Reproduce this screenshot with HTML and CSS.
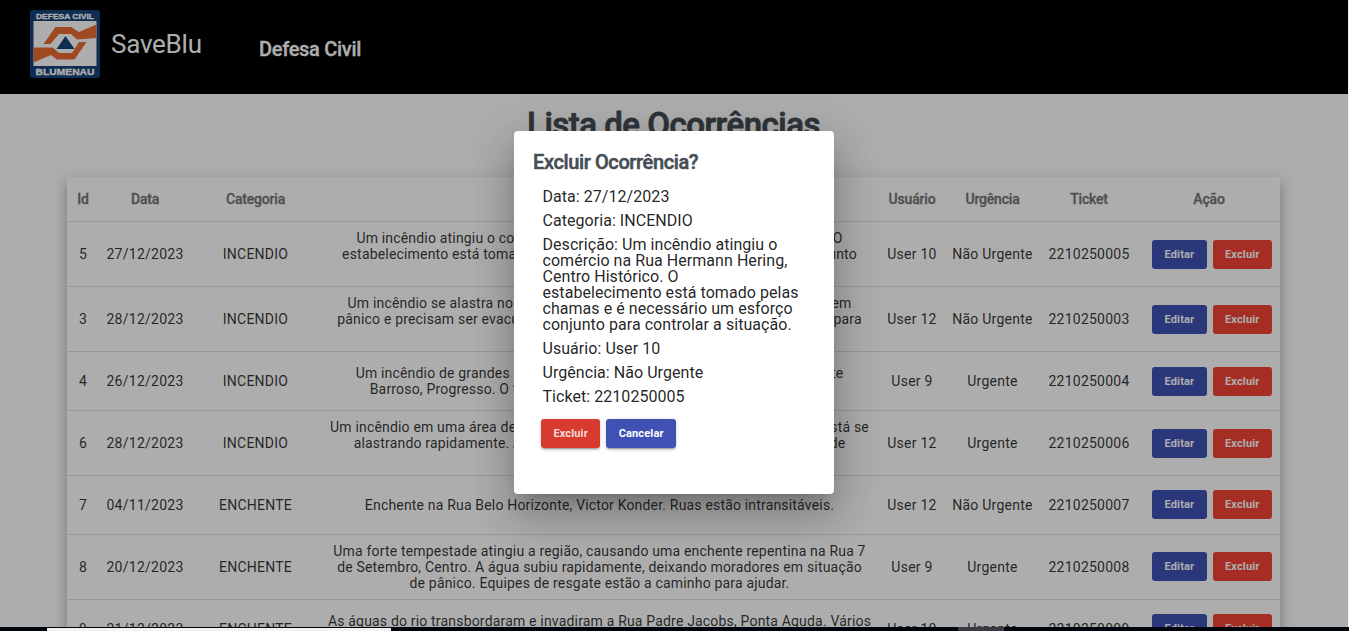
FILE: index.html
```html
<!DOCTYPE html>
<html lang="pt-BR">
<head>
<meta charset="utf-8">
<title>SaveBlu</title>
<link rel="stylesheet" href="styles.css">
</head>
<body>
<div class="app">
  <header class="topbar">
    <svg class="logo" viewBox="0 0 70 68">
      <rect width="70" height="68" rx="3" fill="#15437a"/>
      <rect x="3.5" y="11" width="63" height="45" fill="#fff"/>
      <path d="M13.500 34 25.500 17H41L49 22 66.500 14.500V28L47 29.500 41 24H29L20.500 34Z" fill="#ea6c33"/>
      <path d="M3.500 37.500H22.500L29 43H42L49 32H56.500L44.500 49.500H27L21 45 3.500 52.500Z" fill="#ea6c33"/>
      <path d="M35.500 26 44.500 39H26.500Z" fill="#15437a"/>
      <text x="35" y="9" textLength="58" lengthAdjust="spacingAndGlyphs" class="logo-text logo-top">DEFESA CIVIL</text>
      <text x="35" y="64.700" textLength="59" lengthAdjust="spacingAndGlyphs" class="logo-text logo-bottom">BLUMENAU</text>
    </svg>
    <span class="brand">SaveBlu</span>
    <span class="section">Defesa Civil</span>
  </header>
  <main class="content">
    <h1 class="page-title">Lista de Ocorrências</h1>
    <table class="list">
      <colgroup><col class="c-id"><col class="c-date"><col class="c-cat"><col class="c-desc"><col class="c-user"><col class="c-urg"><col class="c-ticket"><col class="c-act"></colgroup>
      <thead><tr><th>Id</th><th>Data</th><th>Categoria</th><th>Descrição</th><th>Usuário</th><th>Urgência</th><th>Ticket</th><th>Ação</th></tr></thead>
      <tbody>
        <tr class="tall"><td>5</td><td>27/12/2023</td><td>INCENDIO</td><td class="desc">Um incêndio atingiu o comércio na Rua Hermann Hering, Centro Histórico. O<br>estabelecimento está tomado pelas chamas e é necessário um esforço conjunto<br>para controlar a situação.</td><td>User 10</td><td>Não Urgente</td><td>2210250005</td><td><button class="btn primary">Editar</button><button class="btn warn">Excluir</button></td></tr>
        <tr class="tall"><td>3</td><td>28/12/2023</td><td>INCENDIO</td><td class="desc">Um incêndio se alastra no prédio da Rua São Paulo, Victor Konder. Pessoas em<br>pânico e precisam ser evacuadas do lar. Bombeiros estão a caminho do local para<br>ajudar.</td><td>User 12</td><td>Não Urgente</td><td>2210250003</td><td><button class="btn primary">Editar</button><button class="btn warn">Excluir</button></td></tr>
        <tr><td>4</td><td>26/12/2023</td><td>INCENDIO</td><td class="desc">Um incêndio de grandes proporções atingiu a fábrica situada na Rua Vicente<br>Barroso, Progresso. O fogo se espalha e os bombeiros já estão no local.</td><td>User 9</td><td>Urgente</td><td>2210250004</td><td><button class="btn primary">Editar</button><button class="btn warn">Excluir</button></td></tr>
        <tr class="tall"><td>6</td><td>28/12/2023</td><td>INCENDIO</td><td class="desc">Um incêndio em uma área de mata seca próxima da Rua Bahia, Salto. O fogo está se<br>alastrando rapidamente. As equipes já estão no local com o apoio aéreo e de<br>voluntários.</td><td>User 12</td><td>Urgente</td><td>2210250006</td><td><button class="btn primary">Editar</button><button class="btn warn">Excluir</button></td></tr>
        <tr><td>7</td><td>04/11/2023</td><td>ENCHENTE</td><td class="desc">Enchente na Rua Belo Horizonte, Victor Konder. Ruas estão intransitáveis.</td><td>User 12</td><td>Não Urgente</td><td>2210250007</td><td><button class="btn primary">Editar</button><button class="btn warn">Excluir</button></td></tr>
        <tr class="tall"><td>8</td><td>20/12/2023</td><td>ENCHENTE</td><td class="desc">Uma forte tempestade atingiu a região, causando uma enchente repentina na Rua 7<br>de Setembro, Centro. A água subiu rapidamente, deixando moradores em situação<br>de pânico. Equipes de resgate estão a caminho para ajudar.</td><td>User 9</td><td>Urgente</td><td>2210250008</td><td><button class="btn primary">Editar</button><button class="btn warn">Excluir</button></td></tr>
        <tr><td>9</td><td>21/12/2023</td><td>ENCHENTE</td><td class="desc">As águas do rio transbordaram e invadiram a Rua Padre Jacobs, Ponta Aguda. Vários<br>moradores estão desabrigados.</td><td>User 10</td><td>Urgente</td><td>2210250009</td><td><button class="btn primary">Editar</button><button class="btn warn">Excluir</button></td></tr>
      </tbody>
    </table>
  </main>
  <div class="backdrop">
    <section class="dialog" role="dialog">
      <h2 class="dialog-title">Excluir Ocorrência?</h2>
      <div class="details">
        <p>Data: 27/12/2023</p>
        <p>Categoria: INCENDIO</p>
        <p>Descrição: Um incêndio atingiu o comércio na Rua Hermann Hering, Centro Histórico. O estabelecimento está tomado pelas chamas e é necessário um esforço conjunto para controlar a situação.</p>
        <p>Usuário: User 10</p>
        <p>Urgência: Não Urgente</p>
        <p>Ticket: 2210250005</p>
      </div>
      <div class="actions"><button class="btn warn focused">Excluir</button><button class="btn primary">Cancelar</button></div>
    </section>
  </div>
</div>
<footer class="taskbar"><span class="task-search"></span><span class="task-active"></span></footer>
</body>
</html>
```
FILE: styles.css
```css
* { box-sizing: border-box; }
body { margin: 0; height: 631px; overflow: hidden; font-family: Roboto, sans-serif; background: #f1f1f1; }
.app { position: relative; width: 1348px; height: 627px; overflow: hidden; background: #fff; }
.topbar { height: 94px; background: #000; color: #fff; display: flex; align-items: flex-start; padding: 10px 30px; }
.logo { width: 70px; height: 68px; }
.logo-text { fill: #fff; font-family: "Liberation Sans", sans-serif; font-weight: 700; text-anchor: middle; stroke: #fff; stroke-width: .3px; }
.logo-top { font-size: 8px; }
.logo-bottom { font-size: 9.500px; }
.brand { width: 91px; margin: 19px 0 0 11px; font-size: 26px; line-height: 30px; letter-spacing: -.25px; }
.section { margin: 28px 0 0 57px; font-size: 20px; line-height: 23px; font-weight: 500; letter-spacing: -.3px; -webkit-text-stroke: .3px; }
.content { padding: 12px 68px 0 67px; }
.page-title { margin: 0 0 33px; text-align: center; font-size: 33px; line-height: 38px; font-weight: 500; -webkit-text-stroke: .8px; letter-spacing: -.5px; color: #454d55; }
.list { width: 1213px; table-layout: fixed; border-collapse: separate; border-spacing: 0; background: #fff; box-shadow: 0 5px 5px -3px rgba(0,0,0,.2), 0 8px 10px 1px rgba(0,0,0,.14), 0 3px 14px 2px rgba(0,0,0,.12); }
.c-id { width: 32px; } .c-date { width: 92px; } .c-cat { width: 129px; } .c-desc { width: 559px; }
.c-user { width: 66px; } .c-urg { width: 95px; } .c-ticket { width: 98px; } .c-act { width: 142px; }
.list th, .list td { padding: 0; text-align: center; vertical-align: middle; white-space: nowrap; border-bottom: 1px solid #e0e0e0; }
.list th { height: 45px; font-size: 14px; font-weight: 500; -webkit-text-stroke: .3px; letter-spacing: -.2px; color: #757575; }
.list td { height: 59px; font-size: 14px; line-height: 16px; letter-spacing: .25px; color: rgba(0,0,0,.8); }
.list .desc { letter-spacing: .18px; }
.list .tall td { height: 65px; }
.list td:last-child { padding-left: 6px; }
.list tr:nth-child(n+5) td:last-child { padding-bottom: 2px; }
.btn { height: 29px; padding: 0 12.400px; border: 0; border-radius: 3px; font: 700 11px/29px Roboto, sans-serif; letter-spacing: .15px; color: #fff; vertical-align: middle; }
.btn + .btn { margin-left: 6px; }
.primary { background: #3f51b5; }
.warn { background: #f44336; }
.focused { background: #d73a2f; color: #f9dcda; }
.backdrop { position: absolute; inset: 0; background: rgba(0,0,0,.32); display: flex; justify-content: center; align-items: flex-start; padding-top: 131px; }
.dialog { width: 320px; height: 363px; padding: 19px; border-radius: 4px; background: #fff; box-shadow: 0 11px 15px -7px rgba(0,0,0,.2), 0 24px 38px 3px rgba(0,0,0,.14), 0 9px 46px 8px rgba(0,0,0,.12); }
.dialog-title { margin: 0; font-size: 20px; line-height: 24px; font-weight: 500; -webkit-text-stroke: .5px; letter-spacing: -.38px; color: #454d55; }
.details { margin: 15px 0 0 9.500px; width: 257px; font-size: 16px; line-height: 16px; color: rgba(0,0,0,.87); letter-spacing: .05px; }
.details p { margin: 0 0 8px; }
.actions { margin: 14px 0 0 8px; }
.actions .btn { box-shadow: 0 3px 1px -2px rgba(0,0,0,.2), 0 2px 2px rgba(0,0,0,.14), 0 1px 5px rgba(0,0,0,.12); }
.taskbar { display: flex; height: 4px; background: #00040c; }
.task-search { width: 344px; margin: 1px 0 0 47px; background: #f3f3f3; }
.task-active { width: 46px; margin-left: 567px; background: #393b42; }
```
